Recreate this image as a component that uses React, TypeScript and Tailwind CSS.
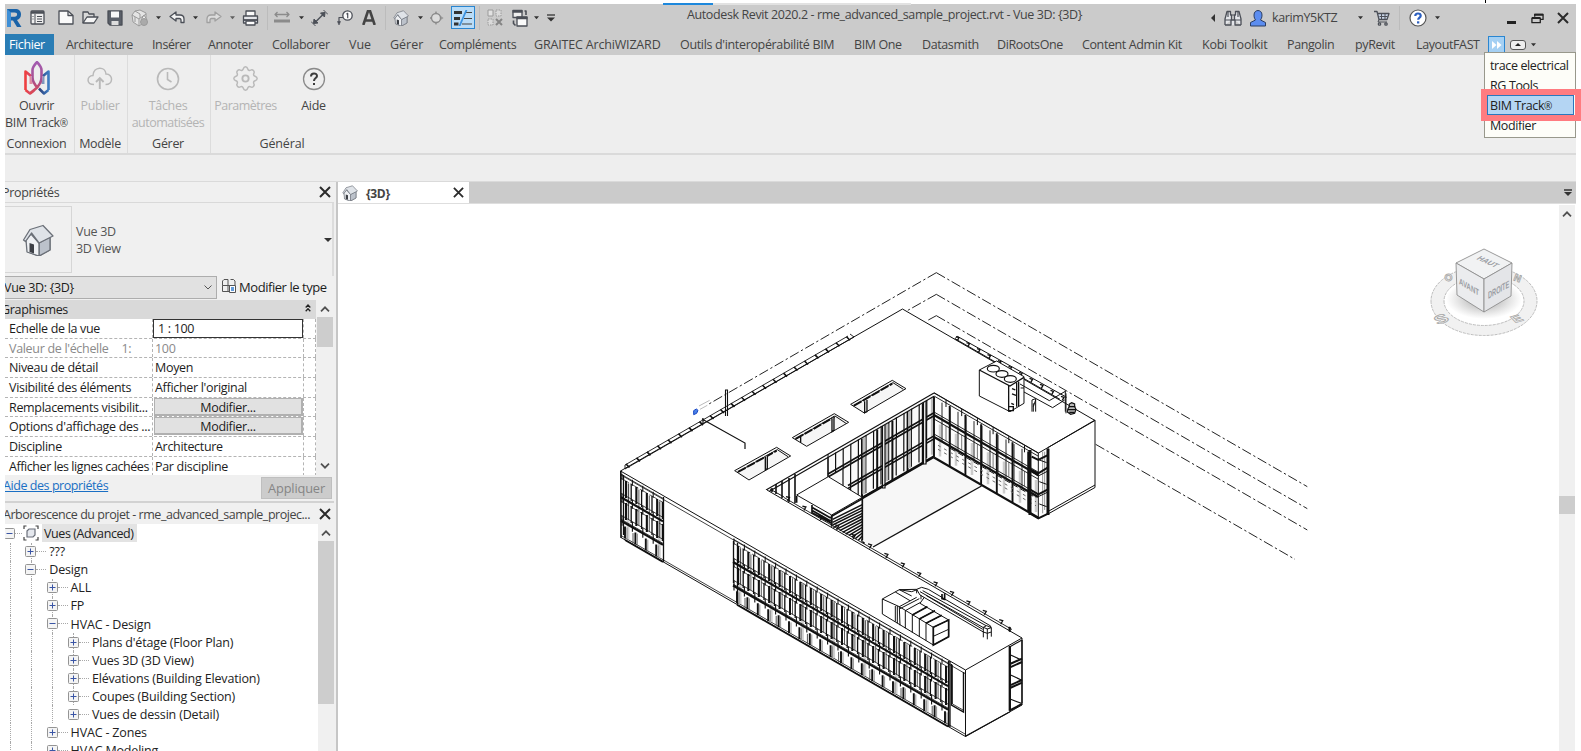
import React from "react";

const UI = "font-['Open_Sans','Noto_Sans',sans-serif]";

/* ---------- small shared pieces ---------- */

function Caret({ className }: { className: string }) {
  return (
    <svg viewBox="0 0 5 4" className={`h-1 w-[5px] shrink-0 ${className}`}>
      <path d="M0 0.3h5L2.500 3.300z" fill="#333" />
    </svg>
  );
}

function Sep({ className }: { className: string }) {
  return <div className={`h-6 w-px shrink-0 bg-[#bcbcbc] ${className}`} />;
}

function Ico({ className, children, box }: { className: string; children: React.ReactNode; box: string }) {
  return (
    <svg viewBox={box} className={`shrink-0 ${className}`} fill="none" stroke="#4b4f57" strokeWidth="1.3" strokeLinejoin="round">
      {children}
    </svg>
  );
}

function Cross({ className }: { className: string }) {
  return (
    <svg viewBox="0 0 12 12" className={`shrink-0 ${className}`}>
      <path d="M1 1l10 10M11 1L1 11" stroke="#2b2b2b" strokeWidth="2" fill="none" />
    </svg>
  );
}

function House({ className }: { className: string }) {
  return (
    <svg viewBox="0 0 32 32" className={`shrink-0 ${className}`} stroke="#6b7078" strokeWidth="1.300" strokeLinejoin="round">
      <path d="M4 15l2 13 11 4 11-6V12L20 4z" fill="#c3c8d0" />
      <path d="M17 19l11-6v13l-11 6z" fill="#bcc2cb" />
      <path d="M4 16l5-6 8 9v13L5 28z" fill="#eef0f3" />
      <path d="M1.500 16L8 5.500 21 1.500 31 12l-14 7L9.500 9 3.500 17.500z" fill="#dfe3e8" />
      <path d="M7.500 19l4.500 1.500v9L7.500 28z" fill="#3c3f45" stroke="none" />
    </svg>
  );
}

function Reg() {
  return <span className="text-[10px]">®</span>;
}

/* ---------- title bar ---------- */

function QuickAccess() {
  return (
    <div className="flex h-[30px] w-[682px] shrink-0 items-center pb-[3px]">
      <svg viewBox="0 0 16 20" className="ml-px h-5 w-4 shrink-0">
        <path d="M1 1h8c4 0 6 2 6 5.500 0 3-1.500 4.700-4 5.500L15.500 19H11L7 12.500H5V19H1z" fill="#1a63a8" />
        <path d="M5 4.500h3.500c2 0 2.600.8 2.600 2s-.8 2.200-2.600 2.200H5z" fill="#ccc" />
        <path d="M1 1l4 3.500V19H1z" fill="#3e8fd6" />
      </svg>
      <Ico className="ml-2 h-[15px] w-[15px]" box="0 0 15 15">
        <rect x="1" y="1" width="13" height="13" rx="1" fill="#eee" />
        <path d="M1 2.500h13" strokeWidth="2.500" />
        <path d="M5 4v10" strokeWidth="1" />
        <path d="M7 6.500h5M7 9h5M7 11.500h5M2.500 6.500h1M2.500 9h1" strokeWidth="1" />
      </Ico>
      <Ico className="ml-[13px] h-[15px] w-4" box="0 0 16 15">
        <path d="M1 1h9l5 4.500V14H1z" fill="#fafafa" />
        <path d="M10 1v4.500h5" />
      </Ico>
      <Ico className="ml-2 h-[13px] w-[17px]" box="0 0 17 13">
        <path d="M1 12V1h5l1 2h5v3" fill="#d9d9d9" />
        <path d="M1 12l4-6h11l-4 6z" fill="#f5f5f5" />
      </Ico>
      <Ico className="ml-2 h-4 w-4" box="0 0 16 16">
        <path d="M1 1h14v14H3l-2-2z" fill="#5b6069" />
        <path d="M4 1.500h8v6H4z" fill="#f7f7f7" stroke="none" />
        <path d="M4.500 11h7v4h-7z" fill="#ddd" stroke="none" />
      </Ico>
      <Ico className="ml-2 h-[18px] w-[18px]" box="0 0 18 18">
        <g stroke="#9a9a9a" strokeWidth="1">
          <path d="M1 6l3-4 5-1 6 3v8l-7 5-6-4z" fill="#e4e4e4" />
          <path d="M1 6l7 4 7-5M8 10v7M4 2l5 3v4M4 8v5" />
          <path d="M13 6l3 5h-6z" fill="#f2f2f2" />
          <circle cx="13" cy="13" r="3.500" fill="#aaa" />
        </g>
      </Ico>
      <Caret className="ml-[7px]" />
      <Ico className="ml-2 h-[13px] w-4" box="0 0 16 13">
        <path d="M1 5.500L7 1v3h4c3 0 4 2 4 4v3.500h-3V9c0-1-.5-1.500-1.500-1.500H7V10z" fill="#f2f2f2" />
      </Ico>
      <Caret className="ml-2" />
      <Ico className="ml-2 h-[13px] w-4" box="0 0 16 13">
        <path d="M15 5.500L9 1v3H5C2 4 1 6 1 8v3.500h3V9c0-1 .5-1.500 1.500-1.500H9V10z" fill="#dcdcdc" stroke="#a0a0a0" />
      </Ico>
      <Caret className="ml-2 opacity-70" />
      <Ico className="ml-[7px] h-4 w-[17px]" box="0 0 17 16">
        <path d="M4 6V1h9v5" fill="#fafafa" />
        <path d="M1.500 6h14v7h-14z" fill="#e4e6ea" />
        <path d="M4 11h9v4H4z" fill="#fff" />
        <path d="M1 10h15" strokeWidth="1.800" />
      </Ico>
      <Sep className="ml-2" />
      <Ico className="ml-[6px] h-[13px] w-4" box="0 0 16 13">
        <path d="M1 3.500h14M3.500 1L1 3.500 3.500 6M12.500 1L15 3.500 12.500 6" stroke="#8b8b8b" strokeWidth="1.300" />
        <path d="M0 10h16" strokeWidth="3" stroke="#8b8b8b" />
      </Ico>
      <Caret className="ml-[9px]" />
      <Ico className="ml-[7px] h-4 w-[17px]" box="0 0 17 16">
        <path d="M4.500 12L12.500 4" strokeWidth="1.500" />
        <path d="M9.500 3l4.500-.5-.5 4.500zM3 9l-.5 4.500 4.500-.5z" fill="#4b4f57" strokeWidth="1" />
        <path d="M12.500 0l4.500 4.500M0 11.500L4.500 16" strokeWidth="1" />
      </Ico>
      <Ico className="ml-[9px] h-4 w-4" box="0 0 16 16">
        <circle cx="10.500" cy="5.500" r="4.700" fill="#fafafa" />
        <path d="M9.500 4.300l1.200-1v5M6 7.500H2v5" strokeWidth="1.200" />
        <path d="M.5 11.500l1.500 3.500 1.500-3.500z" fill="#4b4f57" strokeWidth=".6" />
      </Ico>
      <Ico className="ml-[9px] h-[15px] w-[14px]" box="0 0 14 15">
        <path d="M1.300 15L6 1h2l4.700 14M3.500 10.500h7" strokeWidth="2.600" stroke="#444" strokeLinejoin="miter" />
      </Ico>
      <Sep className="ml-[9px]" />
      <House className="ml-[7px] h-4 w-4" />
      <Caret className="ml-[9px]" />
      <Ico className="ml-[7px] h-4 w-[15px]" box="0 0 15 16">
        <path d="M5.500 2l8 6-8 6z" fill="#999" stroke="none" />
        <circle cx="6" cy="8" r="4.500" fill="#dcdcdc" stroke="#8a8a8a" />
        <path d="M6 1.500v2M6 12.500v2M0 8h1.500" stroke="#8a8a8a" />
      </Ico>
      <div className="ml-[6px] flex h-[23px] w-6 shrink-0 items-center justify-center border border-[#2a86d1] bg-[#b9dcf7]">
        <svg viewBox="0 0 18 16" className="h-4 w-[18px]" fill="none">
          <path d="M0 2.500h8M0 8.500h6M0 14h4.500" stroke="#333" strokeWidth="3.200" />
          <path d="M12 2.500h6M10 8.500h8M8 14h10" stroke="#444" strokeWidth="1.200" />
          <path d="M12.500 0L5.500 16" stroke="#3a92e0" strokeWidth="1.800" />
        </svg>
      </div>
      <Sep className="ml-1" />
      <Ico className="ml-[7px] h-[17px] w-4" box="0 0 16 17">
        <g stroke="#9a9a9a" strokeWidth="1">
          <path d="M1 1h5v6H1z" fill="#e2e2e2" />
          <path d="M9 1h5v6H9zM1 10h5v6H1z" fill="#dadada" strokeDasharray="1.500 1" />
          <path d="M9 10l6 6M15 10l-6 6" stroke="#858585" strokeWidth="2" />
        </g>
      </Ico>
      <Ico className="ml-2 h-[18px] w-[17px]" box="0 0 17 18">
        <path d="M2 1.500h9v7H2z" fill="#eee" />
        <path d="M1.500 2.500h10" strokeWidth="2.500" />
        <path d="M6 8h10v9H6z" fill="#fafafa" />
        <path d="M5.500 9h11" strokeWidth="2.500" />
        <path d="M2.500 11.500v3l2 2M13.500 2h1.500v4" strokeWidth="1.600" />
      </Ico>
      <Caret className="ml-[6px]" />
      <svg viewBox="0 0 8 8" className="ml-2 h-2 w-2 shrink-0">
        <path d="M0 1h8" stroke="#333" strokeWidth="1.300" />
        <path d="M0 3.500h8L4 7.500z" fill="#333" />
      </svg>
    </div>
  );
}

function TitleBar() {
  return (
    <div className="flex h-[30px] items-start">
      <QuickAccess />
      <div className="w-[520px] shrink-0 pt-[2px] text-[12.500px] leading-[18px] text-[#444]">
        <span className="whitespace-nowrap tracking-[-0.031em]">Autodesk Revit 2020.2 - rme_advanced_sample_project.rvt - Vue 3D: {"{3D}"}</span>
      </div>
      <div className="flex h-[28px] min-w-0 flex-1 items-center">
        <svg viewBox="0 0 4 8" className="ml-[4px] h-2 w-1 shrink-0"><path d="M4 0v8L0 4z" fill="#333" /></svg>
        <Ico className="ml-[9px] h-4 w-[18px]" box="0 0 18 16">
          <path d="M1 15V9l2-7.500h3.500V5h1v5M17 15V9l-2-7.500h-3.500V5h-1v5M1 15h6v-5h4v5h6" fill="#e4e6ea" />
          <path d="M1 10h6M11 10h6M7.500 5h3M4 2v5M14 2v5" strokeWidth="1.200" />
        </Ico>
        <svg viewBox="0 0 18 17" className="ml-[7px] h-[17px] w-[18px] shrink-0" stroke="#2c3e63" strokeWidth="1">
          <path d="M5 5c0-6 8-6 8 0 0 3-1 4-1.500 5l5 2.500V16h-15v-3.500l5-2.500C6 9 5 8 5 5z" fill="#5c8df0" />
        </svg>
        <span className="ml-[5px] w-[86px] shrink-0 whitespace-nowrap pt-px text-[12.500px] tracking-[-0.031em] text-[#444]">karimY5KTZ</span>
        <Caret className="" />
        <Ico className="ml-[10px] h-4 w-[17px]" box="0 0 17 16">
          <path d="M1 1.500h3l2 8h8l2-6H5" fill="#c9d4e6" />
          <path d="M6.500 6.500h8M8.500 3.500v6M12 3.500v6M6 9.500l-1 2.500h9" strokeWidth="1" />
          <circle cx="6.500" cy="14" r="1.200" />
          <circle cx="13" cy="14" r="1.200" />
        </Ico>
        <Sep className="ml-[9px]" />
        <svg viewBox="0 0 18 18" className="ml-[9px] h-[18px] w-[18px] shrink-0">
          <circle cx="9" cy="9" r="8" fill="#fff" stroke="#555" strokeWidth="1.200" />
          <path d="M6.300 7c0-3.400 5.400-3.200 5.400-.2 0 1.800-2.500 2-2.500 4" fill="none" stroke="#2b5fc0" strokeWidth="2.200" />
          <path d="M8 12.300h2.300v2.200H8z" fill="#2b5fc0" />
        </svg>
        <Caret className="ml-[8px]" />
        <div className="ml-[67px] mt-[9px] h-[3px] w-[9px] shrink-0 bg-[#222]" />
        <Ico className="ml-[15px] h-[11px] w-[13px]" box="0 0 14 11">
          <path d="M4 3.500V1h9v5.500h-3" stroke="#222" strokeWidth="1.400" />
          <path d="M1 5h9v5H1z" stroke="#222" strokeWidth="1.400" />
          <path d="M3.500 1.500H13M1 5h9" stroke="#222" strokeWidth="2" />
        </Ico>
        <Cross className="ml-[13px] h-3 w-3" />
      </div>
    </div>
  );
}

const TABS: [string, string][] = [
  ["Architecture", "w-[86px] tracking-[-0.031em]"],
  ["Insérer", "w-[56px] tracking-[-0.031em]"],
  ["Annoter", "w-[64px] tracking-[-0.031em]"],
  ["Collaborer", "w-[77px] tracking-[-0.027em]"],
  ["Vue", "w-[41px]"],
  ["Gérer", "w-[49px]"],
  ["Compléments", "w-[95px] tracking-[-0.031em]"],
  ["GRAITEC ArchiWIZARD", "w-[146px] tracking-[-0.014em]"],
  ["Outils d'interopérabilité BIM", "w-[174px] tracking-[-0.027em]"],
  ["BIM One", "w-[68px] tracking-[-0.031em]"],
  ["Datasmith", "w-[75px] tracking-[-0.031em]"],
  ["DiRootsOne", "w-[85px] tracking-[-0.031em]"],
  ["Content Admin Kit", "w-[120px] tracking-[-0.031em]"],
  ["Kobi Toolkit", "w-[85px] tracking-[-0.020em]"],
  ["Pangolin", "w-[68px] tracking-[-0.031em]"],
  ["pyRevit", "w-[61px] tracking-[-0.031em]"],
  ["LayoutFAST", "w-[72px] tracking-[-0.031em]"],
];

function TabRow() {
  return (
    <div className="flex h-[21px] items-center text-[12.500px] text-[#444]">
      <div className="mr-[12px] h-[21px] w-[49px] shrink-0 bg-[#2a7db5] pl-1 leading-[22px] tracking-[-0.031em] text-white">Fichier</div>
      {TABS.map(([name, w]) => (
        <div key={name} className={`shrink-0 whitespace-nowrap pt-0.5 ${w}`}>{name}</div>
      ))}
      <div className="flex h-[17px] w-[17px] shrink-0 items-center justify-center border border-[#2a86d1] bg-[#a5d0f3]">
        <svg viewBox="0 0 10 8" className="h-2 w-2.5"><path d="M0 0l4.500 4L0 8zM5 0l4.500 4L5 8z" fill="#fff" /></svg>
      </div>
      <div className="ml-[5px] flex h-[10px] w-4 shrink-0 items-center justify-center rounded-[3px] border border-[#555] bg-[#eee]">
        <svg viewBox="0 0 6 3" className="h-[3px] w-1.5"><path d="M0 3h6L3 0z" fill="#222" /></svg>
      </div>
      <Caret className="ml-[5px]" />
    </div>
  );
}

/* ---------- ribbon ---------- */

function RibbonPanel({ w, title, children }: { w: string; title: string; children: React.ReactNode }) {
  return (
    <div className={`flex shrink-0 flex-col border-r border-[#dcdcdc] ${w}`}>
      <div className="flex h-[80px] justify-center">{children}</div>
      <div className="flex justify-center whitespace-nowrap leading-[19px]">{title}</div>
    </div>
  );
}

function RibbonButton({ w, label, off, children }: { w: string; label: React.ReactNode[]; off?: boolean; children: React.ReactNode }) {
  return (
    <div className={`flex shrink-0 flex-col items-center ${w} ${off ? "text-[#b4b4b4]" : "text-[#444]"}`}>
      <div className="flex h-[43px] items-center justify-center">{children}</div>
      {label.map((l, i) => (
        <span key={i} className="whitespace-nowrap leading-[16.500px]">{l}</span>
      ))}
    </div>
  );
}

function BimTrackLogo() {
  return (
    <svg viewBox="0 0 28 34" className="mt-0.5 h-[34px] w-7" fill="none" strokeWidth="2.600" strokeLinejoin="round">
      <defs>
        <linearGradient id="btl" x1="0" y1="0" x2="1" y2="0">
          <stop offset="0" stopColor="#ef3f3f" />
          <stop offset="1" stopColor="#c44f86" />
        </linearGradient>
        <linearGradient id="btr" x1="0" y1="0" x2="1" y2="0">
          <stop offset="0" stopColor="#2c3f78" />
          <stop offset="1" stopColor="#3d7cc2" />
        </linearGradient>
        <linearGradient id="btc" x1="0" y1="0" x2="0" y2="1">
          <stop offset="0" stopColor="#a35cb0" />
          <stop offset=".6" stopColor="#a8508f" />
          <stop offset="1" stopColor="#e0484f" />
        </linearGradient>
      </defs>
      <path d="M25.500 29V10.500L20 15v8M25.500 29l-4.500 3.500-5-5" stroke="url(#btr)" />
      <path d="M2.500 29V10.500L8 15v8M2.500 29L7 32.500l4-3" stroke="url(#btl)" />
      <path d="M7 32.500l6-5c4-4 5.500-7 5.500-11V9c0-3-2-5-4.500-8-2.500 3-4.500 5-4.500 8v7.500c0 4 2 7 5.500 11" stroke="url(#btc)" />
      <path d="M8 15v9M20 15v9" stroke="#f3f3f3" strokeWidth=".8" />
    </svg>
  );
}

function Ribbon() {
  return (
    <div className="flex h-[98px] bg-[#eee] text-[12.500px] tracking-[-0.025em] text-[#444]">
      <RibbonPanel w="w-[70px] pr-[6px]" title="Connexion">
        <RibbonButton w="w-[66px]" label={["Ouvrir", <>BIM Track<Reg /></>]}><BimTrackLogo /></RibbonButton>
      </RibbonPanel>
      <RibbonPanel w="w-[53px] pr-[2px]" title="Modèle">
        <RibbonButton off w="w-[51px]" label={["Publier"]}>
          <svg viewBox="0 0 26 22" className="mt-[3px] h-[22px] w-[26px]" fill="none" stroke="#b9b9b9" strokeWidth="1.500">
            <path d="M7 17.500c-8 0-7.500-8.500-1-9C6.500-1 18.500-1 19 7c7.500 0 7.500 10.500-.5 10.500" />
            <path d="M12.800 22V11.500M9 15l3.800-3.800L16.600 15" strokeWidth="1.900" />
          </svg>
        </RibbonButton>
      </RibbonPanel>
      <RibbonPanel w="w-[83px] pr-[2px]" title="Gérer">
        <RibbonButton off w="w-[81px]" label={["Tâches", <span className="tracking-[-0.040em]">automatisées</span>]}>
          <svg viewBox="0 0 24 24" className="mt-[4px] h-6 w-6" fill="none" stroke="#b9b9b9" strokeWidth="1.600">
            <circle cx="12" cy="12" r="10.500" />
            <path d="M11.500 5v7.500l4 2.500" />
          </svg>
        </RibbonButton>
      </RibbonPanel>
      <div className="flex w-[142px] shrink-0 flex-col">
        <div className="flex h-[80px]">
          <RibbonButton off w="w-[69px]" label={[<span className="tracking-[-0.040em]">Paramètres</span>]}>
            <svg viewBox="0 0 24 24" className="mt-[3px] h-[25px] w-[25px]" fill="none" stroke="#b9b9b9" strokeWidth="1.400" strokeLinejoin="round">
              <path d="M12 .8c1.600 0 1.900 1 2.200 2 .4 1.300 1.400 1.800 2.700 1.200 1-.5 1.800-.6 2.700.4 1 1 .9 1.800.4 2.700-.6 1.300-.1 2.300 1.200 2.700 1 .3 2 .6 2 2.200s-1 1.900-2 2.200c-1.300.4-1.800 1.400-1.200 2.700.5 1 .6 1.800-.4 2.700-1 1-1.800.9-2.700.4-1.300-.6-2.300-.1-2.700 1.200-.3 1-.6 2-2.200 2s-1.900-1-2.200-2c-.4-1.300-1.400-1.800-2.700-1.200-1 .5-1.800.6-2.700-.4-1-1-.9-1.800-.4-2.700.6-1.300.1-2.300-1.200-2.700-1-.3-2-.6-2-2.200s1-1.900 2-2.200c1.300-.4 1.800-1.400 1.200-2.700-.5-1-.6-1.800.4-2.700 1-1 1.800-.9 2.700-.4 1.300.6 2.300.1 2.700-1.200.3-1 .6-2 2.200-2z" />
              <circle cx="12" cy="12" r="3" strokeWidth="1.800" />
            </svg>
          </RibbonButton>
          <RibbonButton w="w-[67px]" label={["Aide"]}>
            <svg viewBox="0 0 24 24" className="mt-[4px] h-6 w-6" fill="none">
              <circle cx="12" cy="12" r="10.500" stroke="#8a8a8a" strokeWidth="1.300" />
              <path d="M9 9.500c0-4 6-4 6-.5 0 2-3 2.300-3 5" stroke="#3c3c3c" strokeWidth="2" />
              <path d="M11 16h2v2h-2z" fill="#3c3c3c" />
            </svg>
          </RibbonButton>
        </div>
        <div className="text-center leading-[19px] tracking-[-0.010em]">Général</div>
      </div>
    </div>
  );
}

/* ---------- properties palette ---------- */

function ScrollArrow({ up }: { up?: boolean }) {
  return (
    <svg viewBox="0 0 10 6" className="h-1.5 w-2.5 shrink-0">
      <path d={up ? "M1 5.300l4-4 4 4" : "M1 .7l4 4 4-4"} fill="none" stroke="#505050" strokeWidth="1.700" />
    </svg>
  );
}

type Row = { name: React.ReactNode; value: string; kind?: "input" | "button" | "off" };
const ROWS: Row[] = [
  { name: "Echelle de la vue", value: "1 : 100", kind: "input" },
  { name: <>Valeur de l'échelle<span className="ml-[13px]">1:</span></>, value: "100", kind: "off" },
  { name: "Niveau de détail", value: "Moyen" },
  { name: "Visibilité des éléments", value: "Afficher l'original" },
  { name: "Remplacements visibilit...", value: "Modifier...", kind: "button" },
  { name: "Options d'affichage des ...", value: "Modifier...", kind: "button" },
  { name: "Discipline", value: "Architecture" },
  { name: <span className="tracking-[-0.034em]">Afficher les lignes cachées</span>, value: "Par discipline" },
];

function PropertyRow({ row }: { row: Row }) {
  const color = row.kind === "off" ? "text-[#8a8a8a]" : "text-[#1c1c1c]";
  return (
    <div className={`flex h-[19.700px] shrink-0 border-b border-dashed border-[#b4b4b4] leading-[20px] ${color}`}>
      <div className="w-[148px] shrink-0 whitespace-nowrap border-r border-dashed border-[#b4b4b4] pl-1">{row.name}</div>
      <div className="w-[151px] shrink-0 border-r border-dashed border-[#b4b4b4]">
        {row.kind === "input" && <div className="h-[19px] border border-[#333] pl-1 leading-[18px]">{row.value}</div>}
        {row.kind === "button" && (
          <div className="ml-px h-[18px] border border-b-2 border-r-2 border-[#b0b0b0] bg-[#e1e1e1] text-center leading-[18px]">{row.value}</div>
        )}
        {(!row.kind || row.kind === "off") && <div className="pl-0.5">{row.value}</div>}
      </div>
      <div className="w-3 shrink-0 border-r border-dashed border-[#b4b4b4]" />
    </div>
  );
}

function Properties() {
  return (
    <div className="flex h-[321px] shrink-0 flex-col bg-[#f0f0f0]">
      <div className="flex h-[21px] items-center justify-between border-b border-[#d9d9d9] pr-[3px] text-[#444]">
        <span className="-ml-[3px] pt-[3px]">Propriétés</span>
        <Cross className="h-3 w-3" />
      </div>
      <div className="flex h-[73px] items-center border-r-2 border-[#dcdcdc]">
        <div className="flex h-[67px] w-[67px] shrink-0 items-center justify-center border border-l-0 border-[#d6d6d6]">
          <House className="h-8 w-8" />
        </div>
        <div className="ml-1 flex-1 pt-0.5 leading-[16.500px] text-[#555]">
          <div>Vue 3D</div>
          <div>3D View</div>
        </div>
        <svg viewBox="0 0 8 4" className="h-1 w-2"><path d="M0 0h8L4 4z" fill="#333" /></svg>
      </div>
      <div className="flex h-[24px]">
        <div className="flex h-[23px] w-[212px] shrink-0 items-center justify-between border border-l-0 border-[#adadad] bg-[#e1e1e1] pr-1 text-[#1c1c1c]">
          <span className="-ml-px pt-0.5">Vue 3D: {"{3D}"}</span>
          <svg viewBox="0 0 8 5" className="h-[5px] w-2"><path d="M.5.5L4 4 7.500.5" fill="none" stroke="#555" /></svg>
        </div>
        <svg viewBox="0 0 14 14" className="ml-[5px] mt-[3px] h-[14px] w-[14px] shrink-0" fill="none" stroke="#555" strokeWidth="1">
          <path d="M2 .5h4v6H.5V2zM8.500.5h3l1.500 1.500v4M6 6.500H13M.5 6.500v6H7M6 6.500v6" />
          <path d="M7.500 6.500h6v7h-6z" fill="#fff" />
          <path d="M9 9h3M9 11h3" stroke="#2f7bd0" strokeWidth="1.500" />
        </svg>
        <span className="ml-[3px] whitespace-nowrap text-[13px] leading-[22px] tracking-[-0.034em] text-[#1c1c1c]">Modifier le type</span>
      </div>
      <div className="flex h-[175px] overflow-hidden">
        <div className="w-[311px] shrink-0 bg-white">
          <div className="flex h-[19px] items-center justify-between bg-[#d9d9d9] pr-[5px] text-[#222]">
            <span className="-ml-1 pt-px">Graphismes</span>
            <svg viewBox="0 0 6 8" className="mb-1 h-2 w-1.5" fill="none" stroke="#222" strokeWidth="1.300"><path d="M.7 3.500L3 1l2.300 2.500M.7 7.200L3 4.700l2.300 2.500" /></svg>
          </div>
          {ROWS.map((r, i) => <PropertyRow key={i} row={r} />)}
        </div>
        <div className="flex w-[18px] shrink-0 flex-col items-center bg-[#f0f0f0]">
          <div className="flex h-[17px] items-center"><ScrollArrow up /></div>
          <div className="h-[30px] w-4 bg-[#cdcdcd]" />
          <div className="mt-auto flex h-[18px] items-center"><ScrollArrow /></div>
        </div>
      </div>
      <div className="flex min-h-0 flex-1 items-start justify-between border-b-2 border-[#d2d2d2] pr-[2px]">
        <span className="-ml-0.5 mt-px leading-5 tracking-[-0.035em] text-[#1a6fc4] underline">Aide des propriétés</span>
        <div className="mt-[2px] h-[22px] w-[71px] border border-[#bfbfbf] bg-[#cccccc] text-center text-[12.800px] leading-[21px] tracking-[-0.012em] text-[#858585]">Appliquer</div>
      </div>
    </div>
  );
}

/* ---------- project browser ---------- */

function Toggle({ open }: { open?: boolean }) {
  return (
    <svg viewBox="0 0 11 11" className="h-[11px] w-[11px] shrink-0">
      <rect x=".5" y=".5" width="10" height="10" rx="1" fill="#f4f4f4" stroke="#949494" />
      <path d={open ? "M2.500 5.500h6" : "M2.500 5.500h6M5.500 2.500v6"} stroke="#3a55a5" strokeWidth="1" />
    </svg>
  );
}

const TREE: [string, number, boolean][] = [
  ["???", 1, false],
  ["Design", 1, true],
  ["ALL", 2, false],
  ["FP", 2, false],
  ["HVAC - Design", 2, true],
  ["Plans d'étage (Floor Plan)", 3, false],
  ["Vues 3D (3D View)", 3, false],
  ["Elévations (Building Elevation)", 3, false],
  ["Coupes (Building Section)", 3, false],
  ["Vues de dessin (Detail)", 3, false],
  ["HVAC - Zones", 2, false],
  ["HVAC Modeling", 2, false],
];

function Guide() {
  return <div className="h-full w-[21.300px] shrink-0 border-l border-dotted border-[#a8a8a8]" />;
}

function Browser() {
  return (
    <div className="flex min-h-0 flex-1 flex-col bg-[#f0f0f0]">
      <div className="flex h-[21px] shrink-0 items-center justify-between pr-[3px] text-[#444]">
        <span className="-ml-0.5 whitespace-nowrap pt-1 tracking-[-0.037em]">Arborescence du projet - rme_advanced_sample_projec...</span>
        <Cross className="h-3 w-3" />
      </div>
      <div className="flex min-h-0 flex-1">
        <div className="w-[313px] shrink-0 overflow-hidden bg-white tracking-[-0.014em] text-[#222]">
          <div className="flex h-[18.500px] items-center">
            <div className="-ml-px"><Toggle open /></div>
            <div className="w-[7px] shrink-0 border-t border-dotted border-[#a8a8a8]" />
            <svg viewBox="0 0 16 16" className="ml-px h-4 w-4 shrink-0" fill="none" stroke="#444" strokeWidth="1.200">
              <path d="M3.500 1H1v3M12.500 1H15v3M3.500 15H1v-3M12.500 15H15v-3" />
              <path d="M4 6l2-2h6v6l-2 2H4z" fill="#e5e8ee" stroke="#6a6f7a" />
            </svg>
            <span className="ml-[3px] h-[18px] bg-[#e3e3e3] pl-0.5 pr-[3px] leading-[20px] tracking-[-0.033em]">Vues (Advanced)</span>
          </div>
          {TREE.map(([name, depth, open], i) => (
            <div key={name} className="flex h-[18.100px] items-center pl-[4.500px]">
              <Guide />
              {depth > 1 && <Guide />}
              {depth > 2 && <Guide />}
              <div className="relative -ml-[5.500px] flex h-full items-center">
                {i < 9 && <div className="absolute left-[5.500px] h-full border-l border-dotted border-[#a8a8a8]" />}
                <div className="relative z-10"><Toggle open={open} /></div>
              </div>
              <div className="mr-[3px] w-[10px] shrink-0 border-t border-dotted border-[#a8a8a8]" />
              <span className="whitespace-nowrap pt-[2px]">{name}</span>
            </div>
          ))}
        </div>
        <div className="flex w-4 shrink-0 flex-col items-center">
          <div className="flex h-[17px] items-center"><ScrollArrow up /></div>
          <div className="h-[163px] w-4 bg-[#cdcdcd]" />
        </div>
      </div>
    </div>
  );
}

/* ---------- 3D model ---------- */

const S = 0.577;

/* Vertical strokes of a slanted curtain wall; top and bottom are offsets from its roof edge. */
function mullions(x0: number, x1: number, y0: number, dir: number, top: number, bottom: number, step: number) {
  let d = "";
  for (let x = x0; x <= x1 + 0.01; x += step) {
    const y = y0 + (x - x0) * S * dir;
    d += `M${x.toFixed(1)} ${(y + top).toFixed(1)}V${(y + bottom).toFixed(1)}`;
  }
  return d;
}
function rails(x0: number, x1: number, y0: number, dir: number, offs: number[]) {
  return offs.map((o) => `M${x0} ${(y0 + o).toFixed(1)}L${x1} ${(y0 + o + (x1 - x0) * S * dir).toFixed(1)}`).join("");
}

function LongFacade({ x0, x1, y0 }: { x0: number; x1: number; y0: number }) {
  return (
    <g>
      <path d={mullions(x0 + 3, x1, y0 + 1.7, 1, 8, 64, 31.2)} stroke="#d0d0d0" strokeWidth="3" />
      <path d={mullions(x0 + 1, x1, y0 + 0.6, 1, 7, 24, 5.2)} strokeWidth="1.300" />
      <path d={mullions(x0 + 1, x1, y0 + 0.6, 1, 29, 46, 5.2)} strokeWidth="1.300" />
      <path d={mullions(x0 + 1, x1, y0 + 0.6, 1, 7, 24, 10.4)} strokeWidth="2" />
      <path d={mullions(x0 + 1, x1, y0 + 0.6, 1, 29, 46, 10.4)} strokeWidth="2" />
      <path d={mullions(x0 + 3.5, x1, y0 + 2, 1, 8, 44, 10.4)} strokeWidth=".7" />
      <path d={mullions(x0, x1, y0, 1, 53, 65, 10.4)} strokeWidth="1.900" />
      <path d={mullions(x0 + 2, x1, y0 + 1.1, 1, 53, 65, 10.4)} strokeWidth=".7" stroke="#666" />
      <path d={mullions(x0 + 8, x1, y0 + 4.600, 1, 55, 65, 31.2)} strokeWidth="1" stroke="#555" />
      <path d={rails(x0 - 4, x1, y0 - 2.3, 1, [3, 22, 44, 48])} strokeWidth=".8" />
      <path d={rails(x0 - 4, x1, y0 - 2.3, 1, [26, 49.500])} strokeWidth="2.200" />
      <path d={rails(x0 - 4, x1, y0 - 2.3, 1, [7, 30])} strokeWidth=".7" strokeDasharray="9 2" />
      <path d={rails(x0, x1, y0, 1, [66.500])} strokeWidth="1.800" />
      <path d={mullions(x0 - 3, x1, y0 - 1.7, 1, 2, 8, 10.4)} strokeWidth="1" />
      <path d={mullions(x0 - 3, x1, y0 - 1.7, 1, 22, 31, 10.4)} strokeWidth="1.100" />
      <path d={mullions(x0 - 3, x1, y0 - 1.7, 1, 44, 54, 10.4)} strokeWidth="1.100" />
    </g>
  );
}

function Model() {
  return (
    <svg viewBox="338 204 1220 547" className="h-[547px] w-[1220px]" fill="none" stroke="#111" strokeWidth="1">
      {/* property lines */}
      <g transform="translate(900 260) scale(.3333)" stroke="#222" strokeWidth="3" strokeDasharray="30 8 7 8">
        <path d="M109 38L1222 680M109 103L1222 746M109 167L1222 810M587 553L1185 898" />
        <path d="M109 38L-575 433M109 103L20 153M109 167L85 180" />
      </g>
      <g transform="translate(600 260) scale(.3333)" strokeWidth="3">
        <path d="M297 438l32-17M300 448l22-12" stroke="#999" strokeWidth="2" />
        <path d="M281 452l8-5 5 4-4 9-9 4z" fill="#4a82e8" stroke="#1746c4" />
      </g>

      {/* main volume */}
      <path fill="#fff" stroke="none" d="M620.500 471L902.500 309L1095 420V487.500L1038.500 518.500L934 457.500L862 540L1022 638V705L965.500 736.500L621 537.500z" />
      <path fill="#f7f7f7" stroke="none" d="M863 497L934 457.500L981.500 486L873 547L863 541z" />
      <path d="M981.500 486L873 547" strokeWidth="1.400" />

      {/* courtyard, left wall */}
      <path fill="#fafafa" stroke="none" d="M828 455L934 394V457.500L862 498L828 477z" />
      <g>
        <path d={mullions(828, 934, 455, -1, 2, 22, 7.6)} strokeWidth="1.200" />
        <path d={mullions(843, 934, 446.300, -1, 22, 60, 7.6)} strokeWidth="1.200" />
        <path d={mullions(862, 934, 435.400, -1, 3, 63, 15.2)} strokeWidth="2" />
        <path d={mullions(864, 934, 434.200, -1, 3, 60, 22.8)} stroke="#bbb" strokeWidth="3" />
        <path d={rails(828, 934, 455, -1, [19, 22])} strokeWidth="1.600" />
        <path d={rails(848, 934, 443.500, -1, [42, 45])} strokeWidth="1.600" />
        <path d={rails(862, 934, 435.400, -1, [62, 63.500])} strokeWidth="1.300" />
        <path d="M882.500 426V488H885V425M923.500 402V464H926V401" fill="#fff" strokeWidth="1.200" />
        <path d="M766 490L934 393M769 491.500L934 396.200" strokeWidth="1.200" />
        <path d="M772 492V488M776 494V484M782 498V481M789 502V478M795 503V474" strokeWidth="1.600" />
        <path d="M828 454V476" />
      </g>

      {/* courtyard, right wall */}
      <path fill="#fcfcfc" stroke="none" d="M934 393L1038.500 453V518L934 457.500z" />
      <path d={mullions(940, 1036, 396.500, 1, 28, 60, 16)} stroke="#ccc" strokeWidth="2.500" />
      <path d={mullions(934, 1034, 393, 1, 4, 64, 15.7)} strokeWidth="1.900" />
      <path d={mullions(942, 1034, 397.600, 1, 5, 44, 8)} strokeWidth=".9" />
      <path d={mullions(946, 1034, 399.900, 1, 26, 41, 15.7)} stroke="#777" strokeWidth="1" />
      <path d={rails(934, 1038, 393, 1, [0, 3, 19, 26, 41])} strokeWidth=".9" />
      <path d={rails(934, 1038, 393, 1, [22, 44, 64.500])} strokeWidth="2.200" />
      <path d={rails(950, 1036, 402.200, 1, [46])} strokeWidth="1" strokeDasharray="6 3" />
      <path d={rails(938, 1036, 395.300, 1, [50, 54])} strokeWidth="1" stroke="#666" strokeDasharray="3 4" />
      <path d={mullions(946, 1030, 400, 1, 0, 7, 15.7)} strokeWidth="1" />

      {/* right wing end and side */}
      <path fill="#fff" d="M1048 447.500L1095 420V487.500L1048 514z" />
      <path d="M1038.500 453L1095 420.500M1048 511.500L1095 485" />
      <g transform="translate(900 260) scale(.3333)" strokeWidth="3">
        <path d="M415 578V775" />
        <path d="M390 570V765M444 566V765" strokeWidth="9" />
        <path d="M428 575V760M434 575V750" stroke="#999" />
        <path d="M395 590L415 600L442 586M392 628L415 640L444 622M392 690L415 703L444 688M392 762L415 775L446 760" strokeWidth="6" />
        <path d="M395 635L415 648L442 634M395 697L415 710L442 697M418 600L440 608M418 665L440 673M418 732L440 740" strokeWidth="3" />
      </g>

      {/* entrance canopy */}
      <g transform="translate(610 440) scale(.3333)" strokeWidth="3">
        <path fill="#fff" d="M560 165L655 110L757 172L665 225z" />
        <path fill="#fff" d="M665 228L757 178V300L665 262z" stroke="none" />
        {Array.from({ length: 14 }, (_, i) => {
          const y = 238 + i * 8.500;
          const x = 668 + Math.max(0, y - 262) / 0.9;
          return <path key={i} d={`M${x.toFixed(0)} ${(y - (x - 668) * 0.4).toFixed(0)}L757 ${(y - 44).toFixed(0)}`} strokeWidth="4.500" />;
        })}
        <path d="M757 172V300M665 225V260M560 168V188M665 229L757 176" strokeWidth="5" />
        <path d="M606 195V218L665 250V228M608 203L662 234M608 212L662 243" strokeWidth="5" />
        <path d="M757 172L900 92" strokeWidth="4" />
      </g>

      {/* roof outlines */}
      <path d="M620.500 471L902.500 309L1095 420.500M1038.500 453L934 392.700" />
      <path fill="#fff" stroke="none" d="M767 490L1022 638L965.500 670L740 540L700 500z" />
      <path d="M767 490L1022 638M770 489L784 497" />
      <path d="M784 497.500L1012 629.500" strokeWidth=".9" />
      {Array.from({ length: 14 }, (_, i) => (
        <path key={i} d={`M${786 + i * 16.400} ${(496.500 + i * 9.480).toFixed(1)}l3.500 1l-2 3.500`} strokeWidth="1.300" />
      ))}
      <path d="M1010 627V632" strokeWidth="1.500" />
      <path d="M625 465L848 336M625 469L854 337L850 334M625 465V469" strokeWidth=".9" />
      {Array.from({ length: 22 }, (_, i) => (
        <path key={i} d={`M${626 + i * 10.500} ${(464 - i * 6.060).toFixed(1)}l3.500 3.500`} strokeWidth="1.600" />
      ))}
      <path d="M702 419L745 443V449M703 418V424" strokeWidth="1.200" />
      <path d="M725.500 390V416M727.500 390V416M725 390h3" strokeWidth="1.100" />

      {/* skylights */}
      <g transform="translate(600 260) scale(.3333)" strokeWidth="3" fill="#f6f6f6">
        <path d="M404 632L530 562L572 588L447 660z" />
        <path d="M577 533L703 461L746 487L620 559z" />
        <path d="M752 433L877 361L918 386L793 459z" />
        <path d="M412 637L532 569L564 590M585 538L705 468L738 490M760 438L879 368L910 388" fill="none" />
        <path d="M414 636L530 572M587 537L703 471M762 437L877 371" strokeWidth="6" strokeDasharray="26 5" fill="none" />
        <path d="M496 590V630L502 626V586M696 475V515L702 511V471M794 424V458L801 455V420M602 530V548" strokeWidth="4" />
      </g>

      {/* street facades */}
      <path d="M620.500 471L965.500 670V736.500L621 537.500z" fill="#fff" />
      <path d="M621 475L965 673.500M621 535.500L965 734" strokeWidth=".8" />
      <LongFacade x0={625} x1={663} y0={473.500} />
      <path d="M663.500 497V562M621 471V538M623.500 475V535" strokeWidth="1.300" />
      <LongFacade x0={737} x1={948} y0={538.300} />
      <path d="M733.500 541V583M737.500 543V604" strokeWidth="1.300" />
      <path d="M948.500 661V727M950 661V727" strokeWidth="1.300" />
      <path d="M951.500 664V705L963.500 712V672" strokeWidth="1.400" />
      <path d="M952.500 665V704L963 710" strokeWidth=".8" />

      {/* front wing end */}
      <path d="M965.500 670L1022 638V705L965.500 736.500z" fill="#fff" />
      <g transform="translate(820 540) scale(.3333)" strokeWidth="3">
        <path d="M568 318V512M571 318V512M606 300V490" strokeWidth="4" />
        <path d="M570 372L606 356M570 382L606 366M570 436L606 420M570 444L606 428M568 512L606 492" strokeWidth="6" />
        <path d="M570 320L606 300M572 345L604 360M572 405L604 420M572 478L604 490M436 589L570 515" strokeWidth="3.500" />
        {/* air handling unit */}
        <path fill="#fff" d="M187 177L238 149L275 155L300 146L318 150V165L300 190L386 240V290L340 315L187 222z" />
        <path d="M187 177L238 200L240 256M226 198V245M232 198V250M238 200L290 172M240 206L298 176M238 149L275 168M226 156L270 182M238 149L290 148" />
        <path d="M238 200L340 262V315M340 262L386 240M256 212V265M277 225V278M298 237V290M318 250V302M256 212L300 188M277 225L322 200M298 237L345 212M318 250L365 226M342 288L386 268" />
        <path d="M277 225L322 200M298 237L345 212M318 250L365 226M340 262L386 240V290L340 315z" strokeWidth="5" />
        {/* duct */}
        <path fill="#fff" d="M290 148L305 142L325 148L512 258V270L490 276L300 165z" />
        <path d="M300 155L492 264M308 152L500 258M303 165V178M290 148V160M318 166L488 268" />
        <path fill="#fff" d="M490 262L500 257L514 263V276L502 280L490 276z" />
        <path d="M490 276V292M502 266V298M514 276V290M490 262L502 267L514 263" />
        <path d="M366 162V176L374 178V160M568 260V274" strokeWidth="5" />
      </g>

      {/* chiller and rooftop pipework */}
      <g transform="translate(900 260) scale(.3333)" strokeWidth="3">
        <path d="M165 236L480 418M172 229L500 412M165 236L172 229" />
        {Array.from({ length: 11 }, (_, i) => (
          <path key={i} d={`M${168 + i * 31.500} ${(230 + i * 17.900).toFixed(1)}l9 3l-5 9`} strokeWidth="4" />
        ))}
        <path fill="#fff" d="M238 330L290 303L372 350V430L330 455L238 408z" />
        <path d="M238 330L330 378L372 352M326 376V455M350 368V440M356 365V438M336 386l10 4M336 402l12 4M334 430l8 4M328 440h12v12h-12" strokeWidth="4" />
        <g strokeWidth="3.500" fill="#fff">
          <ellipse cx="280" cy="326" rx="18" ry="10" />
          <ellipse cx="306" cy="342" rx="18" ry="10" />
          <ellipse cx="331" cy="357" rx="18" ry="10" />
        </g>
        <path d="M360 372L448 422L496 394M372 396L458 443L494 420M362 384H372" />
        <path d="M396 455V420L407 416V455M400 430V455M407 420L400 440" strokeWidth="3" />
        <path d="M496 392V455M498 400V460" />
        <path d="M508 440V432l7-4 9 4v8l4 8-4 12-12 3-10-7 2-10z" fill="#bbb" strokeWidth="3.500" />
        <path d="M506 440h20M503 449h25M508 457h16" strokeWidth="3.500" />
      </g>
    </svg>
  );
}

function ViewCube() {
  return (
    <svg viewBox="0 0 110 92" className="h-[92px] w-[110px]">
      <defs>
        <radialGradient id="cubeShade">
          <stop offset="0" stopColor="#777" stopOpacity=".75" />
          <stop offset="1" stopColor="#999" stopOpacity="0" />
        </radialGradient>
      </defs>
      <path fillRule="evenodd" fill="#f1f1f1" stroke="#bdbdbd" strokeDasharray="3 1" d="M2 55a53 34.500 0 1 0 106 0a53 34.500 0 1 0-106 0zM15 55a40 24.500 0 1 0 80 0a40 24.500 0 1 0-80 0z" />
      <ellipse cx="55" cy="53" rx="38" ry="20" fill="url(#cubeShade)" />
      <g fill="#f4f4f4" stroke="#a5a5a5" fontSize="14" fontWeight="700" fontFamily="Liberation Sans, sans-serif" strokeWidth=".8">
        <text transform="matrix(1.3 -.5 .6 .75 9 79)">S</text>
        <text transform="matrix(1 -.3 .6 .6 86 77)">E</text>
        <text transform="translate(84 34) rotate(20)" fontSize="10">N</text>
        <text transform="translate(17 36) rotate(-20)" fontSize="10">O</text>
      </g>
      <g stroke="#8f8f8f" strokeWidth=".9" strokeLinejoin="round">
        <path d="M55 3L83 17L55 33V66V33L27 17z" fill="#f1f2f3" />
        <path d="M27 17L55 33V66L28 49z" fill="#ebecee" />
        <path d="M83 17L55 33V66L82 50z" fill="#e4e5e8" />
      </g>
      <g fill="#9a9da3" fontWeight="700" fontFamily="Liberation Sans, sans-serif">
        <text transform="matrix(.87 .4 -.7 .45 47 13)" fontSize="10" textLength="22" lengthAdjust="spacingAndGlyphs">HAUT</text>
        <text transform="matrix(.8 .48 0 1 30 38)" fontSize="9" textLength="25" lengthAdjust="spacingAndGlyphs">AVANT</text>
        <text transform="matrix(.82 -.46 0 1 59 53)" fontSize="10" textLength="26" lengthAdjust="spacingAndGlyphs">DROITE</text>
      </g>
    </svg>
  );
}

function Viewport() {
  return (
    <div className="flex min-w-0 flex-1 flex-col">
      <div className="flex h-[21px] shrink-0 items-center bg-[#cbcbcb]">
        <div className="flex h-[21px] w-[131px] shrink-0 items-center bg-white pl-[4px]">
          <House className="h-4 w-4" />
          <span className="ml-[8px] w-[87px] pt-0.5 text-[12px] font-bold tracking-[-0.030em] text-[#444]">{"{3D}"}</span>
          <Cross className="h-[11px] w-[11px]" />
        </div>
        <svg viewBox="0 0 8 7" className="ml-auto mr-1 h-[7px] w-2"><path d="M0 1h8" stroke="#333" strokeWidth="1.500" /><path d="M0 3h8L4 7z" fill="#333" /></svg>
      </div>
      <div className="flex min-h-0 flex-1 border-t border-[#dedede] bg-white">
        <div className="relative w-[1221px] shrink-0 overflow-hidden">
          <Model />
          <div className="absolute left-[1091px] top-[42px]"><ViewCube /></div>
        </div>
        <div className="mt-px flex w-4 flex-col items-center bg-[#f0f0f0]">
          <div className="flex h-[18px] items-center"><ScrollArrow up /></div>
          <div className="mt-[273px] h-[18px] w-4 bg-[#cdcdcd]" />
        </div>
      </div>
    </div>
  );
}

export default function App() {
  return (
    <div className={`relative h-[751px] w-[1581px] overflow-hidden bg-white pl-[5px] pt-1 ${UI}`}>
      <div className="flex h-[747px] w-[1571px] flex-col bg-[#cbcbcb]">
        <TitleBar />
        <TabRow />
        <Ribbon />
        <div className="h-[29px] shrink-0 border-b border-t-2 border-[#dadada] bg-[#eee]" />
        <div className="flex min-h-0 flex-1">
          <div className="flex w-[333px] shrink-0 overflow-hidden border-r-2 border-[#c6c6c6] bg-[#f0f0f0] text-[12.500px] tracking-[-0.025em]">
            <div className="flex w-[329px] shrink-0 flex-col">
              <Properties />
              <Browser />
            </div>
          </div>
          <Viewport />
        </div>
      </div>
      <div className="absolute left-[663px] top-[3px] flex h-0.5 w-[248px] bg-[#e2e2e2]"><div className="w-[50px] bg-[#1e88dc]" /></div>
      <div className="absolute left-[1485px] top-0 h-[3px] w-px bg-black" />
      {/* overflow menu of the ribbon tabs */}
      <div className="absolute left-[1484px] top-[52px] flex h-[86px] w-[92px] flex-col border border-[#98988c] bg-[#fdfdf8] pl-[5px] pt-[3px] text-[12.500px] leading-5 tracking-[-0.031em] text-[#222]">
        <span className="whitespace-nowrap">trace electrical</span>
        <span>RG Tools</span>
        <span className="invisible h-5" aria-hidden="true" />
        <span>Modifier</span>
      </div>
      <div className="absolute left-[1481px] top-[89px] h-8 w-[100px] border-[6px] border-[#ff7b80] bg-[#fdfdf8] text-[12.500px] tracking-[-0.031em] text-[#222]">
        <div className="h-5 w-[87px] border border-[#2a78bd] bg-[#b4d5f3] pl-[2px] leading-[20px]">BIM Track<Reg /></div>
      </div>
    </div>
  );
}
